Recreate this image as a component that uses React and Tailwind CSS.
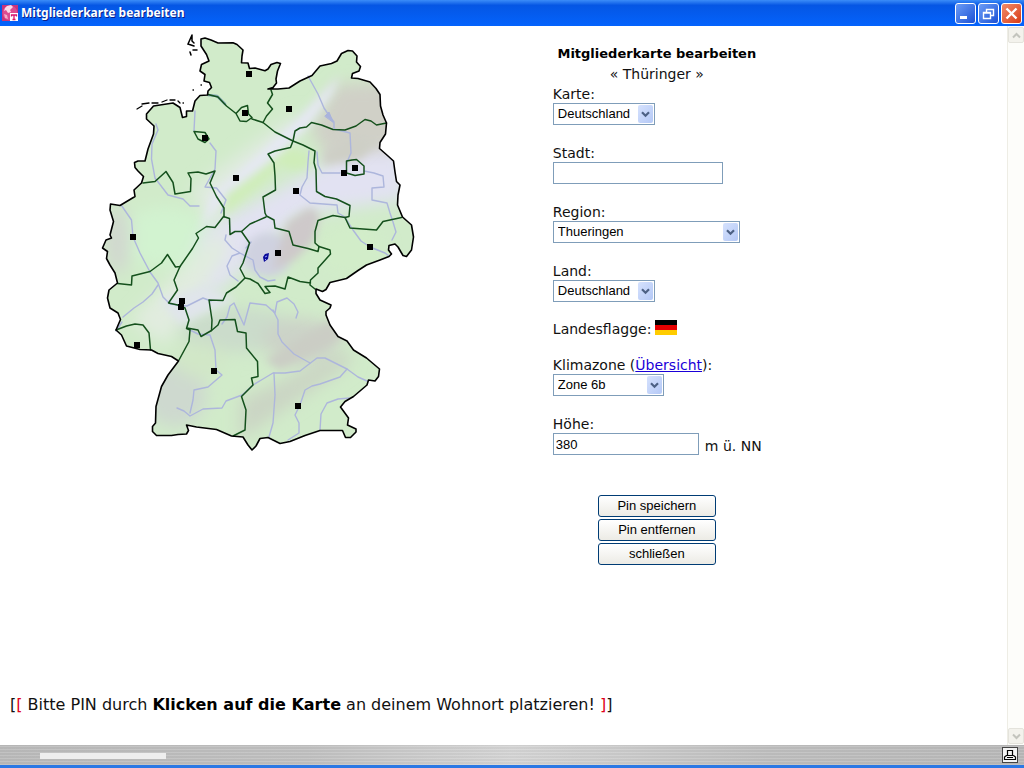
import React from "react";

const OUTLINE =
  "M201 39L205 38L211 40L218 43L233 42.7L237 44.5L243 50L242 56L241.5 62.7L248 63L249.5 68.5L255 68L265 70.7L268 69L271 64.5L277 62.5L280.5 63.5L277.5 71L276 79L276.5 83L273 87.5L268 89L278 89L289 88L300 81L312 75.5L320 66L331.5 63.5L337 61L341.5 53.5L348 50.5L352.5 51L357 56L356.5 62L360.5 66.5L359 71L352.5 73.5L351.5 78L358 78.5L370 82L376 88.5L380 94.5L380.5 106L383 115L386.5 123L385.5 134L380 142.5L379.5 148.5L388 156L393.5 161L395 172L396.5 181.5L400 185L398 195L397.5 205L402.5 217L411.5 225L413.5 237L411.5 250L406.5 256.5L403 255.5L398 247L395 244L389 245.5L388.5 250L391.5 254L389 256.5L380 260L366.5 265L358 270.5L346.5 278.5L330 282.5L326 289.5L322.5 291.5L316 289L316 293.5L320 300L331 305L330 308L326 311.5L326 315L330 325L338 336.5L347 341L353.5 350L366.5 358L379.5 369L378.5 376.5L375 381L368.5 380L367 385L353.5 396.5L345 401.5L340.5 407L348.5 418L347.5 425L356 429L356 432L350.5 437.5L345.5 437.5L342.5 430.5L320 430.5L305 435.5L290 441.5L280 443.5L268 437.5L260 438.5L256 446L252 450L248 445L243 437L231.5 436L216.5 429.5L196.5 427L186.5 425L188.5 430.5L186.5 434L178 434.5L171.5 435.5L156.5 435.5L152.5 431.5L152.5 426.5L155.5 423L156 406.5L161.5 386.5L168 375L178.5 361L171.5 356.5L158 353.5L151.5 350L140 349.5L126.5 346L121.5 335L116 330L120.5 319.5L118 313L110 308L107.5 298L109 290L117.5 283L115 273L110 265L106.5 258.5L107.5 251.5L102.5 248L106 240L111.5 238L110 235L113.5 221.5L110 210L110.5 204L120 205.5L135 196.5L134 190L141.5 183L143.5 176.5L138 171L135 167.5L134.5 162.5L138 161L145 161L148 149L153.5 134L154 126L146.5 119L146.5 114L153.5 106L173 103L180 107.5L182.5 117.5L186.5 116.5L186.5 111L192.5 111L195 101L200 95.5L207.5 95L208 91L211.5 87.5L209.5 82.5L204 81L205 74.5L200 71L201.5 64.5L209 61L206.5 54.5L201 46Z";

const BORDERS = [
  "M208 94.5L218 97L226.5 106L236 113.5L241.5 107.5L247.5 105.5L248.5 114L252 117.5L246.5 121.5L240 121L236 113.5M252 119L263 122.5L275 132L293 141",
  "M271 90L272.5 94.5L267.5 103L272.5 109L266.5 116L263 122.5",
  "M293 141L295 131L300 128L306.5 127L311.5 122.5L321.5 125L333 129.5L345 130L356 126L365 119.5L371 121L376.5 125L386.5 123",
  "M293 141L303 145L315 151L314 162.5L316 170L316.5 191.5L325 196.5L336.5 199L350 205.5L349 216.5L345 217.5L350 228L363 229L376.5 230L383 221.5L401.5 217.5",
  "M345 217.5L333 215.5L318 220.5L315 231.5L315 243L319 246.5L318 251.5L308 248.5L293 245L289 231.5L275 228L274 220L266.5 216L265 213L263 197L275.5 190L275 176L274 163L268 154L275 151L290.5 147.5L293 141",
  "M319 246.5L330 250L330.5 254L318 268L318 273L310.5 280L310 285L315 289M310.5 283L300 281.5L288 277L285 289L275 286L265 286.5L270 292.5L265 293.5L258 283.5L250 279L245 278L240 268.5L243 263L249.5 243L241.5 231.5L250 224L266 217",
  "M241.5 231.5L235 231.5L230 234.5L229.5 218.5L223.5 216.5L215 227.5L206.5 226.5L196 233.5L198.5 238L192.5 248.5L180 266.5L175.5 267L167.5 254.5L161.5 263L150 271.5L132 276L131.5 285L117.5 283.5",
  "M224 217L224 208L216.5 196.5L210 183L215 171L206 174L198 172L188 173L191 178.5L190.5 191.5L175 194L173 182.5L166 171.5L155 181.5L143 183",
  "M180 266.5L174 280L177.5 290L168.5 303L180 305.5L185 308L189 320L186.5 328.5L190 330L189 341.5L179 360M187 328L198 330L201 336.5L211.5 330.5L212 320L209 300L223 300.5L226.5 293L236 287L245 278",
  "M211.5 330.5L218 325L220 320L235 319.5L237.5 331.5L246 333L246.5 348L257.5 361.5L258 376.5L251.5 378L253 385L241.5 396.5L246 410L245 430L233 436",
  "M116 330L126.5 326L135 324L143 325L149 333L150.5 350",
  "M194 131.5L205 132.5L209 139L205 142.5L198 139Z",
  "M346.5 161L352 160L356.5 159.5L364 166L364 174L355 175.5L346.5 173Z",
];

const RIVERS = [
  "M156 124L158 130L152 144L151.5 159L155 178L168 195L183 199L190 206L199 206",
  "M195 111L194 131M210 143L216 151L215 169L205 187L216.5 188L226 200L221 213",
  "M121.5 205.5L131.5 220L133 237L140 253L150 272L158 283L163 297L170 304L187 306L203 298L211 301",
  "M158 285L152 294L143 302L134 308L123 317M116 331L122 322",
  "M222 324L227 317L230 306L234 303L238 312L244 325L250 303L266 305L275 313L277 302L287 298L294 304L298 312L296 318",
  "M226 235L225 240L232 248L240 253L253 260L255 270L260 277L268 281L275 280M240 253L232 256L227 266L230 275L238 281M246 248L251 242",
  "M389 256L385 253L370 247L361 241L353 230L345 217L338 213L337 205L310 203L300 195L302 187L307 178L308 162L309 151",
  "M334 129L350 133L351 153L347 162M317 152L318 165L322 173L340 173M364 171L374 173L383 176L384 187L372 188L372 200L387 203L390 213L393 222L396 232L392 240",
  "M308 76L318 94L324 108L328 114L334 122L334 129",
  "M177 408L184 411L190 416L203 409L222 408L226 401L242 395L253 385L263 379L273 373L285 373L300 371L317 358L325 358L347 369L358 377L367 381",
  "M273 310L278 320L278 334L282 342L294 354L310 363M274 373L275 395L273 423L269 437",
  "M347 369L340 377L320 384L312 386L305 390L300 405L295 415L299 423L299 433L288 440M350 398L338 399L327 403L321 414L320 430",
  "M190 330L198 334L210 335L215 350L216 370L222 375L208 387L194 390L193 400L190 413",
];

const PINS = [
  [249, 74], [245, 113], [289, 109], [205, 138], [236, 178], [296, 191],
  [355, 168], [344, 173], [133, 237], [370, 247], [278, 253], [182, 301],
  [181, 307], [137, 345], [214, 371], [298, 406],
];

function GermanyMap() {
  return (
    <svg className="block h-[425px] w-[330px] shrink-0" viewBox="90 30 330 425" role="img" aria-label="Deutschland">
      <defs>
        <clipPath id="land"><path d={OUTLINE} /></clipPath>
        <filter id="soft" x="-50%" y="-50%" width="200%" height="200%"><feGaussianBlur stdDeviation="8" /></filter>
        <filter id="soft-sm" x="-50%" y="-50%" width="200%" height="200%"><feGaussianBlur stdDeviation="4" /></filter>
      </defs>
      <g clipPath="url(#land)">
        <rect x="90" y="30" width="330" height="425" fill="#d1ebca" />
        <g filter="url(#soft)">
          <ellipse cx="165" cy="237" rx="45" ry="30" fill="#d2f3d0" />
          <ellipse cx="118" cy="240" rx="13" ry="34" fill="#d1d8cf" />
          <path d="M336 84L420 80L400 150L330 160L310 130Z" fill="#d0d0c7" />
          <path d="M340 155L405 150L405 200L300 215L220 290L170 305L205 230Z" fill="#e2e2f2" />
          <path d="M190 190L300 110L285 150L210 225Z" fill="#e0ebe0" />
          <ellipse cx="240" cy="330" rx="60" ry="22" fill="#cbdccb" />
          <ellipse cx="175" cy="395" rx="32" ry="32" fill="#ced9cf" />
          <ellipse cx="300" cy="340" rx="38" ry="22" fill="#ccd3c8" />
          <path d="M240 400L350 348L350 365L240 440Z" fill="#cbd5c4" />
          <ellipse cx="350" cy="250" rx="35" ry="25" fill="#d2edc9" />
          <ellipse cx="200" cy="360" rx="25" ry="18" fill="#d1e7c7" />
          <path d="M130 320L220 230L230 250L165 345Z" fill="#e1ecdf" />
        </g>
        <g filter="url(#soft-sm)">
          <path d="M340 75L332 94L305 130L270 160L220 203L200 230L212 195L255 158L300 116Z" fill="#e6e8f4" />
          <path d="M300 140L225 195L225 215L270 178Z" fill="#cfedb9" />
          <ellipse cx="295" cy="160" rx="15" ry="10" fill="#cfedb9" />
          <ellipse cx="268" cy="255" rx="24" ry="22" fill="#cfd1e0" />
          <path d="M287 222L310 207L320 215L314 240L295 260L272 270Z" fill="#cec9ca" />
          <path d="M325 150L352 135L380 140L360 160L322 165Z" fill="#cecfc6" />
          <path d="M160 300L205 285L235 300L180 325Z" fill="#e0e5eb" />
          <path d="M265 360L330 320L345 338L280 370Z" fill="#cbcdc5" />
        </g>
      </g>
      <g fill="none" strokeLinejoin="round" strokeLinecap="round">
        {RIVERS.map((d) => <path key={d} d={d} stroke="#adb6dc" strokeWidth="1.4" />)}
        <path d="M208 95L217 96L225 104" stroke="#86a9b8" strokeWidth="2.5" />
        <path d="M325 116L329 112L333 122Z" fill="#a9b3dc" stroke="#a9b3dc" />
        {BORDERS.map((d) => <path key={d} d={d} stroke="#14501c" strokeWidth="1.5" />)}
        <path d={OUTLINE} stroke="#000" strokeWidth="1.6" />
      </g>
      <g fill="none" strokeLinecap="round" stroke="#000">
        <path d="M192 35L188 44L194 46M192 35L192 41L194 43M193 50L197 50M190 52L191 55" strokeWidth="1.5" />
        <path d="M137 109L142 106M142 104L149 103M152 103L158 103M162 102L167 100M170 100L175 100M178 101L180 103M183 103h.5M193 90h.5M201 85h.5" strokeWidth="1.3" />
      </g>
      {PINS.map(([x, y]) => <rect key={x + "-" + y} x={x - 3} y={y - 3} width="6" height="6" fill="#000" />)}
      <path d="M265 254L269 253L268 259L264 262L263 257Z" fill="#0a0a9a" />
      <path d="M265 257L267 256M265 260L266 259" stroke="#9ba5ff" strokeWidth="1" />
    </svg>
  );
}

function Select({ id, value, options, className }) {
  return (
    <div className={"relative h-[22px] " + className}>
      <select
        id={id}
        defaultValue={value}
        className="block h-full w-full appearance-none border border-[#7f9db9] bg-white pr-5 pl-1 font-['Liberation_Sans',Arial,sans-serif] text-[13px] leading-5 text-black outline-none"
      >
        {options.map((o) => <option key={o}>{o}</option>)}
      </select>
      <span className="pointer-events-none absolute top-0.5 right-0.5 bottom-0.5 flex w-[15px] items-center justify-center rounded-xs bg-linear-to-br from-[#d6e2fd] to-[#b4c8f6]">
        <svg className="h-[7px] w-[9px]" viewBox="0 0 9 7"><path d="M1 1.2L4.5 4.7L8 1.2" fill="none" stroke="#4d6185" strokeWidth="2.2" /></svg>
      </span>
    </div>
  );
}

function Field({ label, id, children }) {
  return (
    <div>
      <label htmlFor={id} className="block leading-[17px]">{label}</label>
      {children}
    </div>
  );
}

const inputClass =
  "block h-[22px] border border-[#7f9db9] bg-white px-0.5 font-['Liberation_Sans',Arial,sans-serif] text-[13px] text-black outline-none";

function PinForm() {
  return (
    <form className="w-[208px] pt-[17px] text-[14px] text-[#111]" onSubmit={(e) => e.preventDefault()}>
      <h1 className="text-center text-[13px] leading-[21px] font-bold whitespace-nowrap text-black">Mitgliederkarte bearbeiten</h1>
      <p className="text-center leading-[21px]">« Thüringer »</p>
      <div className="mt-px flex flex-col gap-5">
        <Field label="Karte:" id="karte">
          <Select id="karte" value="Deutschland" options={["Deutschland"]} className="w-[102px]" />
        </Field>
        <Field label="Stadt:" id="stadt">
          <input id="stadt" type="text" className={inputClass + " w-[170px]"} />
        </Field>
        <Field label="Region:" id="region">
          <Select id="region" value="Thueringen" options={["Thueringen"]} className="w-[187px]" />
        </Field>
        <Field label="Land:" id="land-select">
          <Select id="land-select" value="Deutschland" options={["Deutschland"]} className="w-[102px]" />
        </Field>
        <div className="flex h-[15px] items-center gap-1">
          <span>Landesflagge:</span>
          <svg className="mb-1 h-[15px] w-[22px]" viewBox="0 0 22 15" role="img" aria-label="Deutschland">
            <path d="M0 0h22v5H0z" fill="#000" />
            <path d="M0 5h22v5H0z" fill="#e60000" />
            <path d="M0 10h22v5H0z" fill="#fc0" />
          </svg>
        </div>
        <div>
          <div className="leading-[17px]">
            <label htmlFor="zone">Klimazone</label> (<a href="#zonen" className="text-[#1a00d8] underline">Übersicht</a>):
          </div>
          <Select id="zone" value="Zone 6b" options={["Zone 6b"]} className="w-[111px]" />
        </div>
        <Field label="Höhe:" id="hoehe">
          <div className="flex items-end gap-1.5">
            <input id="hoehe" type="text" defaultValue="380" className={inputClass + " w-[146px]"} />
            <span className="leading-[17px] whitespace-nowrap">m ü. NN</span>
          </div>
        </Field>
      </div>
      <div className="mx-auto mt-10 flex w-[118px] flex-col gap-0.5">
        {["Pin speichern", "Pin entfernen", "schließen"].map((t) => (
          <button
            key={t}
            type="button"
            className="h-[22px] rounded-[3px] border border-[#003c74] bg-linear-to-b from-white to-[#ecebe5] font-['Liberation_Sans',Arial,sans-serif] text-[13px] leading-5 text-black"
          >
            {t}
          </button>
        ))}
      </div>
    </form>
  );
}

function TitleButton({ label, color, children }) {
  return (
    <button type="button" aria-label={label} className={"flex size-[21px] items-center justify-center rounded-[3px] border border-white " + color}>
      <svg className="size-[19px]" viewBox="0 0 19 19" fill="none" stroke="#fff">{children}</svg>
    </button>
  );
}

function ScrollButton({ label, d }) {
  return (
    <button type="button" aria-label={label} className="flex h-4 items-center justify-center rounded-xs border border-[#e4e3dc] bg-[#f3f2ec]">
      <svg className="h-[7px] w-[9px]" viewBox="0 0 9 7"><path d={d} fill="none" stroke="#c3c4bd" strokeWidth="2" /></svg>
    </button>
  );
}

export default function App() {
  return (
    <div className="flex min-h-screen flex-col bg-white font-['DejaVu_Sans',Verdana,sans-serif]">
      <header className="flex h-[26px] items-center gap-[3px] bg-linear-to-b from-[#3b8cf8] via-[#0556e4] via-20% to-[#0463fc] px-0.5">
        <svg className="size-4" viewBox="0 0 16 16">
          <rect width="16" height="16" fill="#c8347c" />
          <circle cx="8" cy="8" r="7.5" fill="#dc4c90" />
          <path d="M5 1L9 0L11 2L8 5L9 7L6 8L4 5L2 6L3 3Z" fill="#fbd9e8" />
          <path d="M2 9L5 10L6 14L3 13Z" fill="#f3a8c8" />
          <rect x="8" y="8" width="8" height="8" fill="#fff" />
          <path d="M9.500 11.500V10H14.500V11.500M12 10V14.500M10.500 14.500H13.500" fill="none" stroke="#d8146c" strokeWidth="1.300" />
        </svg>
        <span className="flex-1 font-['Noto_Sans',sans-serif] text-[12px] font-bold text-white text-shadow-[1px_1px_0_#0a1f8a]">Mitgliederkarte bearbeiten</span>
        <div className="flex gap-0.5">
          <TitleButton label="Minimieren" color="bg-linear-to-br from-[#6c9cf6] to-[#1d4fd4]">
            <path d="M4 13.500h7" strokeWidth="3" />
          </TitleButton>
          <TitleButton label="Wiederherstellen" color="bg-linear-to-br from-[#6c9cf6] to-[#1d4fd4]">
            <path d="M7.500 8V5.500H14.500V11.500H12M7 5.500h8M4.500 8.500h7v6h-7zM4 9h8" strokeWidth="1.400" />
          </TitleButton>
          <TitleButton label="Schließen" color="bg-linear-to-br from-[#f08a68] to-[#d8380c]">
            <path d="M4.500 4.500L14.500 14.500M14.500 4.500L4.500 14.500" strokeWidth="2.400" />
          </TitleButton>
        </div>
      </header>

      <div className="flex flex-1">
        <main className="flex flex-1 flex-col">
          <div className="grid grid-cols-[549fr_451fr]">
            <div className="pt-1 pl-[90px]"><GermanyMap /></div>
            <PinForm />
          </div>
          <p className="mt-auto px-2.5 pb-7 text-[16px] leading-6 text-[#111]">
            [<span className="text-[#e0001a]">[</span> Bitte PIN durch <b className="text-black">Klicken auf die Karte</b> an deinem Wohnort platzieren! <span className="text-[#e0001a]">]</span>]
          </p>
        </main>
        <div className="flex w-[17px] flex-col justify-between border-l border-[#eeede5] bg-[#fdfdfa] py-px">
          <ScrollButton label="Nach oben" d="M1 5.500L4.500 2L8 5.500" />
          <ScrollButton label="Nach unten" d="M1 1.500L4.500 5L8 1.500" />
        </div>
      </div>

      <footer className="flex h-[23px] items-center border-b-[3px] border-[#2b78e4] bg-[repeating-linear-gradient(0deg,#ffffff18_0_1px,#00000008_1px_3px),linear-gradient(90deg,#bcbcbc,#c2c2c2_30%,#d6d6d6_50%,#c0c0c0_75%,#bababa)] pr-1.5 pl-10">
        <div className="mt-0.5 h-1.5 w-[126px] bg-[#eeeeee]" />
        <button type="button" aria-label="Drucken" className="ml-auto flex size-4 items-center justify-center border border-[#444] bg-[#f4f4f4]">
          <svg className="size-[14px]" viewBox="0 0 14 14" fill="none" stroke="#000" strokeWidth="1.200">
            <path d="M4.500 7V2.500H9.500V7M3.500 7.500H10.500M3.500 7.500L1.500 9V11.500H12.500V9L10.500 7.500M4 9.500H10" />
          </svg>
        </button>
      </footer>
    </div>
  );
}
